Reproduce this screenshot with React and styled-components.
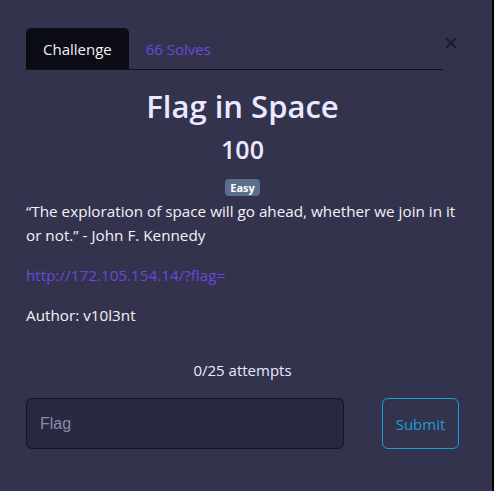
import React from "react";
import styled, { createGlobalStyle } from "styled-components";

const Global = createGlobalStyle`
  html, body {
    margin: 0;
    padding: 0;
    background: #000;
  }
  body {
    font-family: "Open Sans", "Noto Sans", sans-serif;
  }
`;

const Modal = styled.div`
  width: 492px;
  height: 491px;
  background: #33334d;
  box-sizing: border-box;
  padding: 28px 33px 0 26px;
  position: relative;
  color: #e6e4f5;
`;

const CloseButton = styled.button`
  position: absolute;
  top: 36px;
  right: 34px;
  background: none;
  border: 0;
  padding: 0;
  width: 14px;
  height: 14px;
  cursor: pointer;
`;

const Tabs = styled.div`
  display: flex;
  width: 417px;
  border-bottom: 1px solid #13131f;
  height: 41px;
`;

const Tab = styled.div`
  display: flex;
  align-items: center;
  padding: 0 17px;
  font-size: 15px;
  border-radius: 5px 5px 0 0;
  color: ${(p) => (p.active ? "#f0f0f8" : "#6a48dc")};
  background: ${(p) => (p.active ? "#0c0c15" : "transparent")};
`;

const Title = styled.h1`
  margin: 16px 0 0;
  text-align: center;
  font-size: 31px;
  font-weight: 600;
  line-height: 40px;
  color: #ebe8ff;
`;

const Points = styled.h2`
  margin: 6px 0 0;
  text-align: center;
  font-size: 25px;
  font-weight: 600;
  line-height: 34px;
  color: #ebe8ff;
`;

const BadgeRow = styled.div`
  display: flex;
  justify-content: center;
  margin-top: 13px;
`;

const Badge = styled.span`
  background: #5b6e8c;
  color: #fff;
  font-size: 11px;
  font-weight: 700;
  line-height: 17px;
  padding: 0 5.5px;
  border-radius: 4px;
`;

const Text = styled.p`
  margin: 0 0 16px;
  font-size: 15.25px;
  line-height: 24px;
  color: ${(p) => p.color || "#f2f2f8"};
`;

const Description = styled.div`
  margin-top: 3px;
`;

const Attempts = styled.div`
  text-align: center;
  font-size: 15px;
  line-height: 21px;
  margin-top: 33px;
  color: #ece8ff;
`;

const Form = styled.div`
  display: flex;
  align-items: stretch;
  margin-top: 17px;
`;

const FlagInput = styled.input`
  width: 318px;
  height: 51px;
  box-sizing: border-box;
  background: #282840;
  border: 1px solid #15151f;
  border-radius: 6px;
  padding: 0 13px;
  font-family: "Liberation Sans", Arial, sans-serif;
  font-size: 16px;
  color: #ddd;
  outline: none;
  &::placeholder {
    color: #8a8aab;
  }
`;

const SubmitButton = styled.button`
  margin-left: auto;
  width: 77px;
  height: 51px;
  box-sizing: border-box;
  background: transparent;
  border: 1px solid #1c9bd8;
  border-radius: 6px;
  color: #1c9bd8;
  font-family: "Open Sans", "Noto Sans", sans-serif;
  font-size: 15px;
  cursor: pointer;
`;

export default function App() {
  return (
    <>
      <Global />
      <Modal>
        <CloseButton aria-label="Close">
          <svg width="14" height="14" viewBox="0 0 14 14">
            <path d="M2 2 L12 12 M12 2 L2 12" stroke="#1d1d2c" strokeWidth="2" />
          </svg>
        </CloseButton>
        <Tabs>
          <Tab active>Challenge</Tab>
          <Tab>66 Solves</Tab>
        </Tabs>
        <Title>Flag in Space</Title>
        <Points>100</Points>
        <BadgeRow>
          <Badge>Easy</Badge>
        </BadgeRow>
        <Description>
          <Text>
            “The exploration of space will go ahead, whether we join in it or not.” - John F. Kennedy
          </Text>
          <Text color="#6a48dc">http://172.105.154.14/?flag=</Text>
          <Text>Author: v10l3nt</Text>
        </Description>
        <Attempts>0/25 attempts</Attempts>
        <Form>
          <FlagInput placeholder="Flag" />
          <SubmitButton>Submit</SubmitButton>
        </Form>
      </Modal>
    </>
  );
}
